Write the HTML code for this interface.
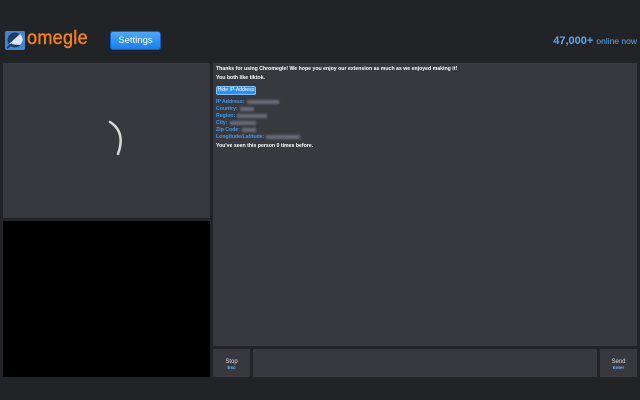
<!DOCTYPE html>
<html><head><meta charset="utf-8"><style>
*{margin:0;padding:0;box-sizing:border-box}
body{width:640px;height:400px;background:#222326;font-family:"Liberation Sans",sans-serif;position:relative;overflow:hidden}
.abs{position:absolute}
.panel{background:#38393f}
.t{font-size:5.2px;font-weight:bold;color:#fff;position:absolute;left:216px;white-space:nowrap}
.b{color:#3d9bf0}
.blur{display:inline-block;height:4px;background:#6a6d78;filter:blur(1px);vertical-align:middle;margin-left:2px}
</style></head><body>
<svg class="abs" style="left:5px;top:31px" width="21" height="20" viewBox="0 0 21 20">
<rect x="0" y="0" width="20" height="19" rx="2" fill="#3e86d6"/>
<circle cx="10" cy="9" r="7.5" fill="#1b3e6e"/>
<path d="M4 13 L15 3 A7 7 0 0 1 15 14 Z" fill="#dfe6ee"/>
<path d="M2 17 L7 13" stroke="#1b3e6e" stroke-width="2"/>
</svg>
<div class="abs" style="left:27px;top:28px;font-size:19px;color:#f7821b;letter-spacing:0.3px;transform:scaleX(0.95);transform-origin:left;-webkit-text-stroke:0.4px #f7821b">omegle</div>
<div class="abs" style="left:110px;top:31px;width:51px;height:19px;border-radius:3px;background:linear-gradient(#4aa8ff,#1a7ff0);border:1px solid #0f5fc0;color:#fff;font-size:9.5px;text-align:center;line-height:17px">Settings</div>
<div class="abs" style="right:3px;top:35px;color:#5aa8f0;font-size:11px;white-space:nowrap"><b>47,000+</b> <span style="font-size:8.5px">online now</span></div>

<div class="abs panel" style="left:3px;top:63px;width:207px;height:155px"></div>
<svg class="abs" style="left:100px;top:118px" width="30" height="40" viewBox="0 0 30 40"><path d="M10 4 Q26 14 18 36" stroke="#d8d8d8" stroke-width="2.5" fill="none" stroke-linecap="round"/></svg>
<div class="abs" style="left:3px;top:221px;width:207px;height:156px;background:#000"></div>

<div class="abs panel" style="left:213px;top:63px;width:424px;height:283px"></div>
<div class="t" style="top:66px">Thanks for using Chromegle! We hope you enjoy our extension as much as we enjoyed making it!</div>
<div class="t" style="top:75px">You both like tiktok.</div>
<div class="abs" style="left:216px;top:86px;width:40px;height:9px;border-radius:2px;background:#2f8ff0;border:1px solid #7ec0ff;color:#fff;font-size:5px;line-height:7px;text-align:center">Hide IP-Address</div>
<div class="t b" style="top:99px">IP Address:<span class="blur" style="width:32px"></span></div>
<div class="t b" style="top:106px">Country:<span class="blur" style="width:14px"></span></div>
<div class="t b" style="top:113px">Region:<span class="blur" style="width:30px"></span></div>
<div class="t b" style="top:120px">City:<span class="blur" style="width:26px"></span></div>
<div class="t b" style="top:127px">Zip Code:<span class="blur" style="width:14px"></span></div>
<div class="t b" style="top:134px">Longitude/Latitude:<span class="blur" style="width:34px"></span></div>
<div class="t" style="top:143px">You've seen this person 0 times before.</div>

<div class="abs panel" style="left:213px;top:349px;width:37px;height:28px;text-align:center;color:#ddd;font-size:6px;padding-top:10px">Stop<br><span style="color:#6bb6ff;font-size:4.5px;font-weight:bold">Esc</span></div>
<div class="abs panel" style="left:253px;top:349px;width:344px;height:28px"></div>
<div class="abs panel" style="left:600px;top:349px;width:37px;height:28px;text-align:center;color:#ddd;font-size:6px;padding-top:10px">Send<br><span style="color:#6bb6ff;font-size:4.5px;font-weight:bold">Enter</span></div>
</body></html>
